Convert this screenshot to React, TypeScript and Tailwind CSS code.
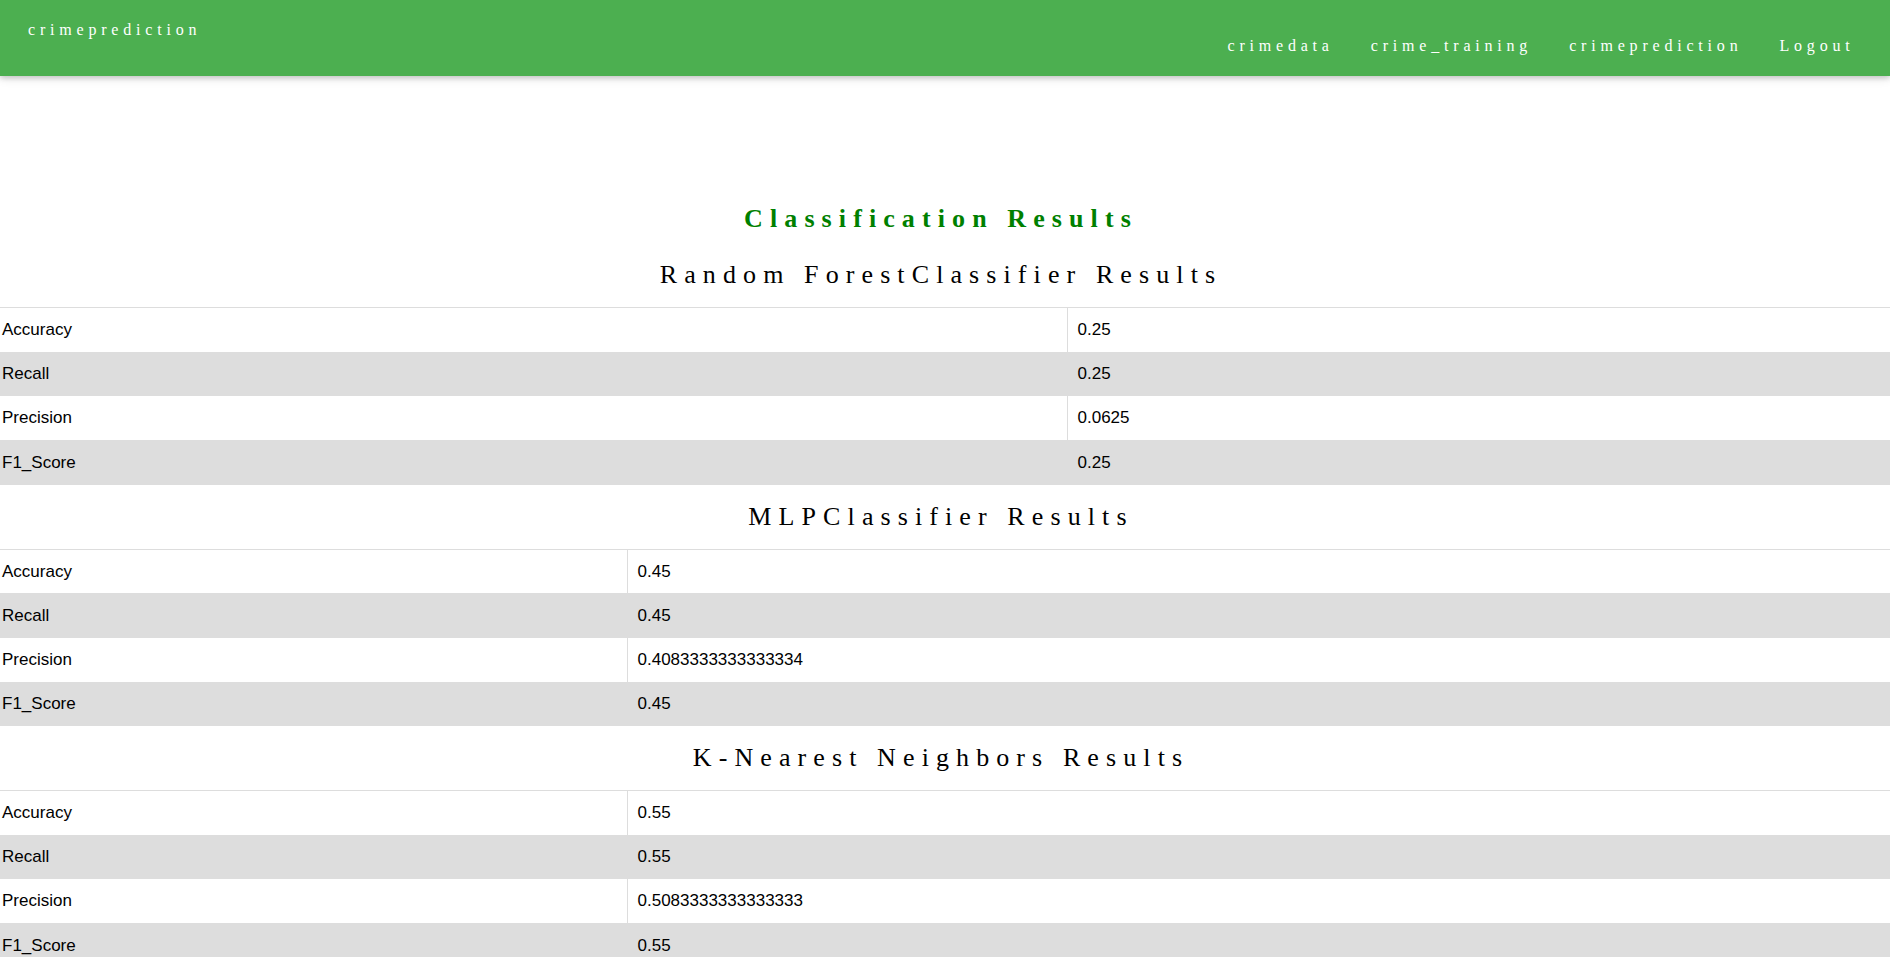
import React from "react";

type Metric = { label: string; value: string };

type ResultSet = { title: string; split: string; rows: Metric[] };

const navLinks = ["crimedata", "crime_training", "crimeprediction", "Logout"];

const results: ResultSet[] = [
  {
    title: "Random ForestClassifier Results",
    split: "w-[1067px]",
    rows: [
      { label: "Accuracy", value: "0.25" },
      { label: "Recall", value: "0.25" },
      { label: "Precision", value: "0.0625" },
      { label: "F1_Score", value: "0.25" },
    ],
  },
  {
    title: "MLPClassifier Results",
    split: "w-[627px]",
    rows: [
      { label: "Accuracy", value: "0.45" },
      { label: "Recall", value: "0.45" },
      { label: "Precision", value: "0.4083333333333334" },
      { label: "F1_Score", value: "0.45" },
    ],
  },
  {
    title: "K-Nearest Neighbors Results",
    split: "w-[627px]",
    rows: [
      { label: "Accuracy", value: "0.55" },
      { label: "Recall", value: "0.55" },
      { label: "Precision", value: "0.5083333333333333" },
      { label: "F1_Score", value: "0.55" },
    ],
  },
];

const Navbar = () => {
  return (
    <div className="relative z-10 h-[76px] w-full bg-[#4CAF50] flex items-start justify-between shadow-[0_2px_5px_0_rgba(0,0,0,0.16),0_2px_10px_0_rgba(0,0,0,0.12)] font-['Liberation_Serif',serif] text-white text-[16px] tracking-[4.8px]">
      <span className="mt-[21px] pl-[28px] leading-[18px]">crimeprediction</span>
      <div className="flex items-start mt-[36.5px] pr-[17px]">
        {navLinks.map((link) => (
          <span key={link} className="px-[18.5px] leading-[18px]">
            {link}
          </span>
        ))}
      </div>
    </div>
  );
};

const ResultTable = ({ title, split, rows }: ResultSet) => {
  return (
    <div className="w-full">
      <h2 className="mt-[17px] mb-[17px] pr-[8px] text-center text-black text-[26px] leading-[30px] tracking-[7.1px] font-['Liberation_Serif',serif]">
        {title}
      </h2>
      <table className="w-full border-collapse border-t border-[#dddddd] font-['Liberation_Sans',Arial,sans-serif] text-[17px] text-black">
        <tbody>
          {rows.map((row, i) => (
            <tr key={row.label} className={`h-[44.25px] ${i % 2 === 1 ? "bg-[#dddddd]" : "bg-white"}`}>
              <td className={`${split} pl-[2px] border-r border-[#dddddd] align-middle`}>{row.label}</td>
              <td className="pl-[10px] align-middle">{row.value}</td>
            </tr>
          ))}
        </tbody>
      </table>
    </div>
  );
};

export default function App() {
  return (
    <div className="min-h-screen w-full bg-white">
      <Navbar />
      <div className="w-full pb-10">
        <h1 className="mt-[128px] mb-[26px] pr-[8px] text-center text-[#008000] font-bold text-[26px] leading-[30px] tracking-[7.1px] font-['Liberation_Serif',serif]">
          Classification Results
        </h1>
        {results.map((set) => (
          <ResultTable key={set.title} {...set} />
        ))}
      </div>
    </div>
  );
}
